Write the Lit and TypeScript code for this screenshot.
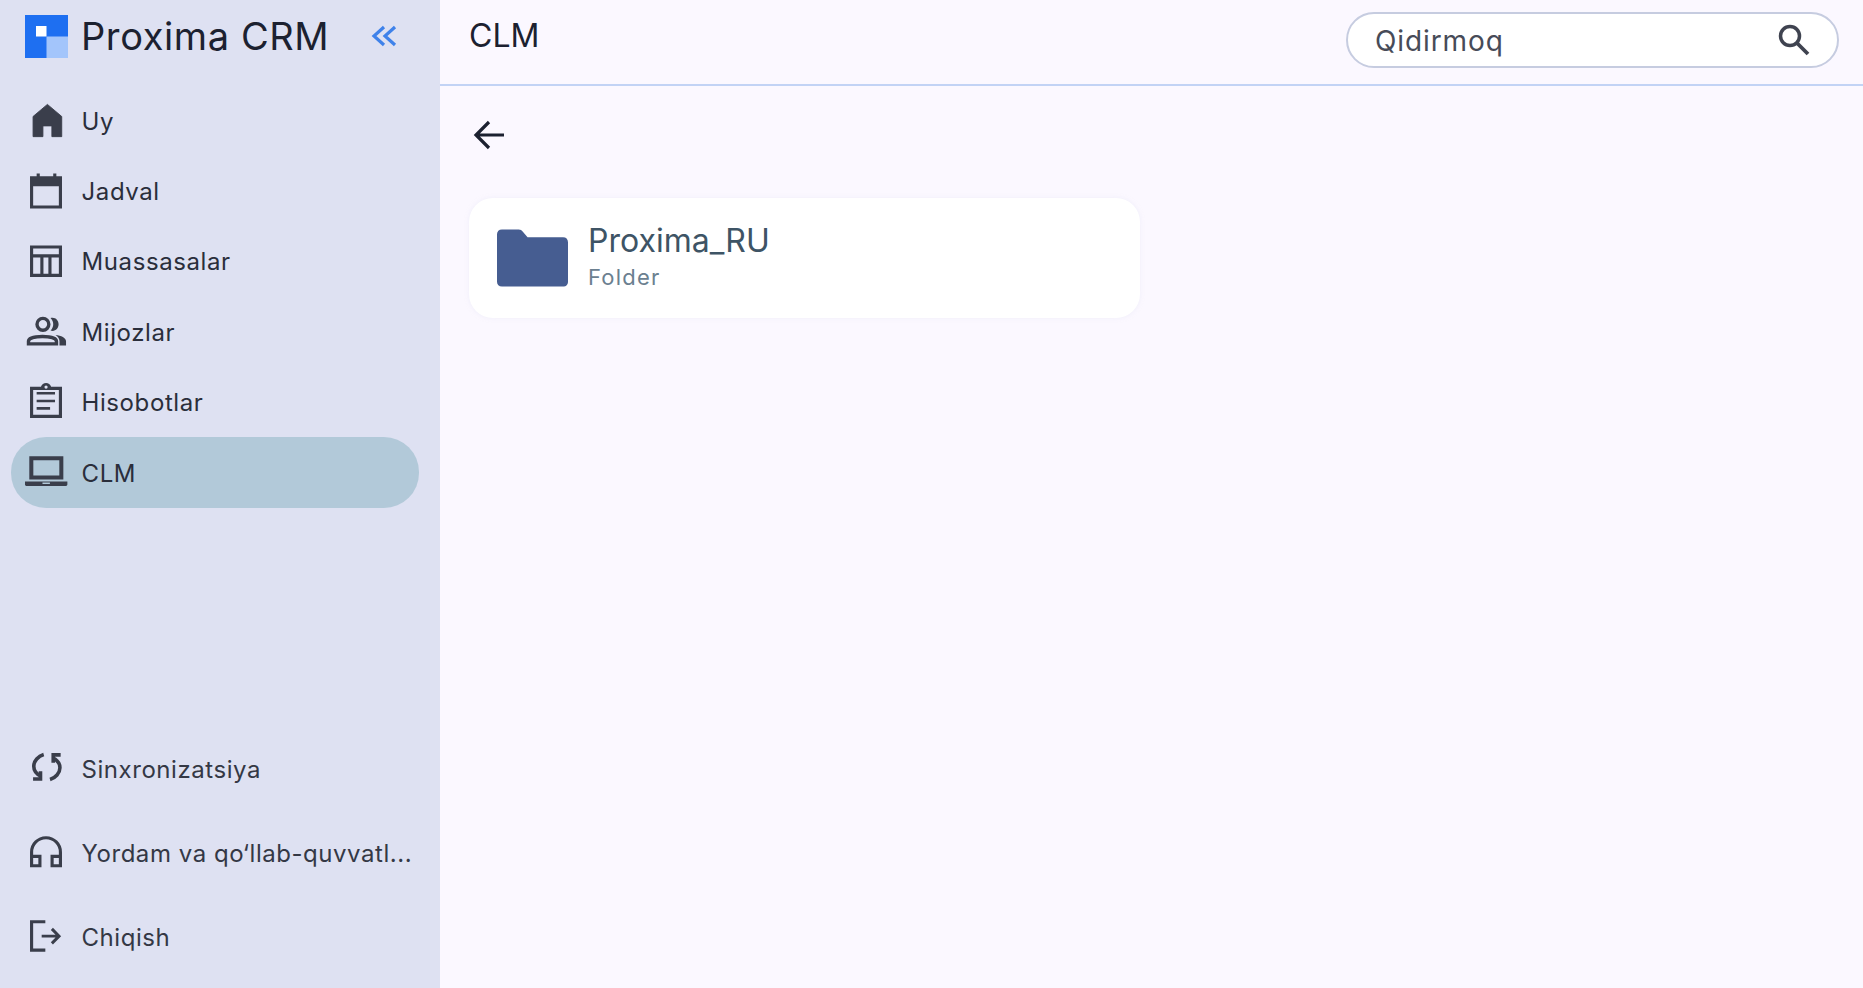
import { LitElement, html, css, svg } from "lit";
import { customElement } from "lit/decorators.js";

const top = [
  { label: "Uy", icon: svg`<path d="M9 42V19.500L25 6l16 13.500V42H30V30H20v12z" stroke="#3a3e4b" stroke-width="1" stroke-linejoin="round"/>` },
  { label: "Jadval", icon: svg`<path fill-rule="evenodd" d="M13 4h3.500v3h15V4H35v3h6.300v36H5.600V7H13zM9.100 18v21.500h28.700V18z"/>` },
  { label: "Muassasalar", icon: svg`<path fill-rule="evenodd" d="M5.600 6h35.700v35.300H5.600zM9.100 9.500v6.500h28.700V9.500zM9.100 19.500v18.300h8V19.500zm11.500 0v18.300h5.500V19.500zm9 0v18.300h8.200V19.500z"/>` },
  { label: "Mijozlar", icon: svg`<g fill="none" stroke="#3a3e4b" stroke-width="3.800"><circle cx="20" cy="16" r="6.600"/><path d="M3.900 37.800v-2.800c0-3.800 7.500-5.500 15.600-5.500s15.600 1.700 15.600 5.500v2.800z"/></g><path d="M28.500 9c5-1.500 9 2.200 9 7s-4 8.500-9 7c2-2 3-4.300 3-7s-1-5-3-7zM34 28c6.500.8 11.800 3 11.800 7v4.700h-7.300V35c0-3-1.700-5.200-4.500-7z"/>` },
  { label: "Hisobotlar", icon: svg`<path fill-rule="evenodd" d="M5.600 6.500h12.200C18.600 4 21 2.200 23.500 2.200S28.400 4 29.200 6.500h12.100v34.800H5.600zM9.100 10v27.800h28.700V10zM23.500 5a1.800 1.800 0 100 3.600 1.800 1.800 0 000-3.600zM13 12.300h20.500v2.900H13zM13 20.900h20.500v2.900H13zM13 29.100h15v2.900H13z"/>` },
  { label: "CLM", icon: svg`<path fill-rule="evenodd" d="M4.800 5.900h38v26h-38zM9.300 10.400v17h29v-17zM0 34h47.300v3.500c0 .8-.7 1.500-1.500 1.500H1.500C.7 39 0 38.300 0 37.500zM19.500 35.300v1.500h8.300v-1.500z"/>`, active: true },
];
const bottom = [
  { label: "Sinxronizatsiya", icon: svg`<g fill="none" stroke="#3a3e4b" stroke-width="4"><path d="M39.800 8.800H31.500V17.600"/><path d="M31 12C36 14.500 39 18.500 39 23.200 39 29 34 34.500 27.900 36.300"/><path d="M9 35.800H17.300V27"/><path d="M17.800 32.600C12.800 30.100 9.800 26.100 9.800 21.400 9.800 15.600 14.800 10.100 20.900 8.300"/></g>` },
  { label: "Yordam va qo‘llab-quvvatl...", icon: svg`<path fill-rule="evenodd" d="M5.600 23.600a17.850 17.850 0 0 1 35.700 0V40.500H28.500V26.500H37.800V23.600a14.350 14.350 0 0 0-28.700 0V26.500H18.400V40.500H5.600zM9.100 30v7h5.800v-7zM32 30v7h5.800v-7z"/>` },
  { label: "Chiqish", icon: svg`<path d="M5.600 5.800H22.700V9.300H9.100V37.500H22.700V41H5.600z"/><path d="M18.600 23.600H37.500M30 15.500l8 8.100-8 8.100" fill="none" stroke="#3a3e4b" stroke-width="3.300"/>` },
];

@customElement("app-root")
export class AppRoot extends LitElement {
  static styles = css`
    :host { display: flex; width: 100%; height: 988px; overflow: hidden; font-family: Inter, "Noto Sans", sans-serif; background: #fbf8ff; }
    .side { width: 440px; flex: none; background: #dee1f2; display: flex; flex-direction: column; padding: 0 21px 0 11px; box-sizing: border-box; }
    .brand { height: 85.5px; flex: none; display: flex; align-items: center; padding-left: 14px; }
    .brand .logo { width: 43px; height: 43px; flex: none; margin-top: -13px; }
    .brand .name { font-size: 38px; line-height: 44px; color: #1c2130; margin-left: 13px; flex: 1; margin-top: -13px; letter-spacing: .6px; }
    .brand .collapse { width: 30px; height: 30px; flex: none; margin-right: 20px; margin-top: -13px; }
    .nav { display: flex; flex-direction: column; }
    .item { height: 70.4px; display: flex; align-items: center; border-radius: 35px; padding-left: 14px; font-size: 24px; letter-spacing: .6px; color: #2a2e3b; }
    .item.active { background: #b2c9d9; }
    .item svg { width: 43px; height: 43px; flex: none; fill: #3a3e4b; margin-right: 13.500px; }
    .item span { margin-top: 1px; }
    .spacer { flex: 1; }
    .foot { display: flex; flex-direction: column; padding-bottom: 9.500px; }
    .foot .item { height: 84px; white-space: nowrap; color: #343845; letter-spacing: .55px; }
    .main { flex: 1; display: flex; flex-direction: column; min-width: 0; }
    .bar { height: 86px; flex: none; box-sizing: border-box; border-bottom: 2px solid #c2d3f5; display: flex; align-items: center; justify-content: space-between; padding: 0 24px 0 29px; }
    .bar .title { font-size: 32px; color: #1c2130; margin-top: -14px; }
    .search { width: 493px; height: 56px; box-sizing: border-box; background: #fff; border: 2px solid #c6cce0; border-radius: 28px; display: flex; align-items: center; justify-content: space-between; padding: 0 24px 0 27px; font-size: 28px; letter-spacing: .9px; color: #474b58; margin-top: -4px; }
    .search span { margin-top: 1px; }
    .search svg { width: 38px; height: 38px; fill: none; stroke: #3f4350; stroke-width: 3.500; flex: none; }
    .content { padding: 0 28px; display: flex; flex-direction: column; align-items: flex-start; }
    .back { width: 48px; height: 48px; margin-top: 25px; margin-left: -2px; fill: none; stroke: #1c2130; stroke-width: 3.200; }
    .card { width: 671px; height: 120px; margin-top: 39px; margin-left: 1px; background: #fff; border-radius: 24px; box-sizing: border-box; padding: 0 20px; display: flex; align-items: center; box-shadow: 0 0 4px rgba(230,230,245,.5); }
    .folder { width: 71px; height: 58px; flex: none; fill: #465d91; margin-left: 8px; margin-right: 20px; }
    .card .text { margin-top: -2px; }
    .card .t { font-size: 32px; line-height: 36px; color: #3e5465; }
    .card .s { font-size: 22px; line-height: 27px; color: #6b8090; margin-top: 5px; letter-spacing: 1.2px; }
  `;

  private row(i: { label: string; icon: unknown; active?: boolean }) {
    return html`<div class="item ${i.active ? "active" : ""}"><svg viewBox="0 0 48 48">${i.icon}</svg><span>${i.label}</span></div>`;
  }

  render() {
    return html`
      <aside class="side">
        <div class="brand">
          <svg class="logo" viewBox="0 0 43 43">
            <rect width="43" height="43" fill="#1e6ff1"/>
            <rect x="21.500" y="21.500" width="21.500" height="21.500" fill="#a3c5fb"/>
            <rect x="11" y="11" width="10.500" height="10.500" fill="#fff"/>
          </svg>
          <div class="name">Proxima CRM</div>
          <svg class="collapse" viewBox="0 0 30 30" fill="none" stroke="#3f82ea" stroke-width="3.200">
            <path d="M15 6 5 15l10 9M26 6 16 15l10 9"/>
          </svg>
        </div>
        <nav class="nav">${top.map((i) => this.row(i))}</nav>
        <div class="spacer"></div>
        <div class="foot">${bottom.map((i) => this.row(i))}</div>
      </aside>
      <main class="main">
        <header class="bar">
          <div class="title">CLM</div>
          <div class="search">
            <span>Qidirmoq</span>
            <svg viewBox="0 0 38 38"><circle cx="15" cy="15" r="9.500"/><path d="M22 22l11 11" stroke-width="3.800"/></svg>
          </div>
        </header>
        <div class="content">
          <svg class="back" viewBox="0 0 48 48"><path d="M38 24H11M23 11 10 24l13 13"/></svg>
          <div class="card">
            <svg class="folder" viewBox="0 0 72 58"><path d="M5 0h17c2 0 3 .8 4 2l5 6h36c3 0 5 2 5 5v40c0 3-2 5-5 5H5c-3 0-5-2-5-5V5c0-3 2-5 5-5z"/></svg>
            <div class="text"><div class="t">Proxima_RU</div><div class="s">Folder</div></div>
          </div>
        </div>
      </main>
    `;
  }
}
